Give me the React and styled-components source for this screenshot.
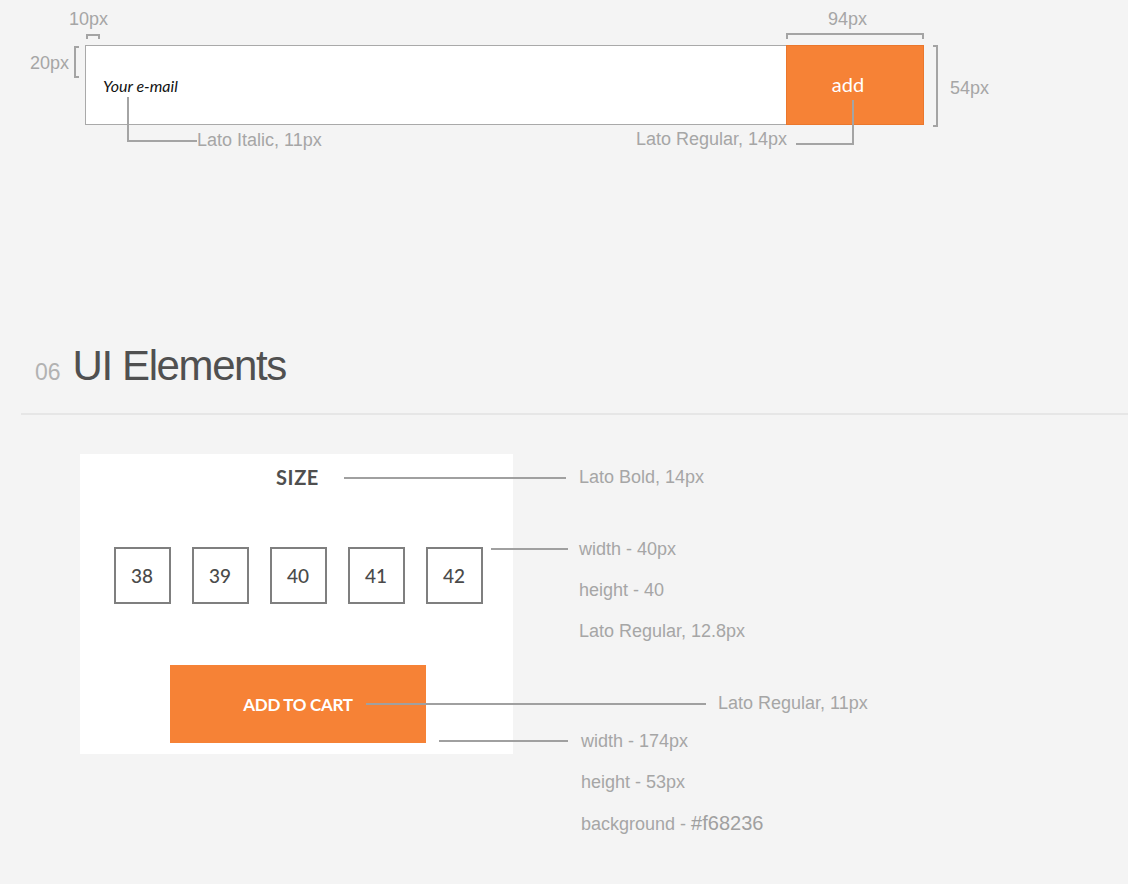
import React from 'react'
import styled, { createGlobalStyle } from 'styled-components'

const GlobalStyle = createGlobalStyle`
  html, body {
    margin: 0;
    padding: 0;
    background: #f4f4f4;
  }
  body {
    font-family: "Liberation Sans", Arial, sans-serif;
  }
`

const Page = styled.div`
  width: 1128px;
  min-height: 884px;
  background: #f4f4f4;
  overflow: hidden;
`

// ---- top spec: e-mail field ----
const TopSpec = styled.div`
  height: 341px;
  box-sizing: border-box;
  padding: 45px 0 0 85px;
`

const Field = styled.div`
  position: relative;
  display: flex;
  width: 839px;
  height: 80px;
`

const EmailInput = styled.div`
  flex: 1;
  display: flex;
  align-items: center;
  box-sizing: border-box;
  padding-left: 17px;
  background: #fff;
  border: 1px solid #a9a9a9;
  border-right: none;
  font-family: Lato, sans-serif;
  font-style: italic;
  font-size: 16px;
  color: #111;
`

const AddButton = styled.div`
  width: 138px;
  display: flex;
  align-items: center;
  justify-content: center;
  box-sizing: border-box;
  padding: 0 14px 2px 0;
  background: #f68236;
  border: 1px solid #eb772c;
  color: #fff;
  font-family: Lato, sans-serif;
  font-size: 20px;
`

const Label = styled.span`
  position: absolute;
  left: ${p => p.$x}px;
  top: ${p => p.$y}px;
  font-size: 18px;
  line-height: 20px;
  color: #a6a6a6;
  white-space: nowrap;
`

// bracket / leader drawn with borders
const Mark = styled.span`
  position: absolute;
  left: ${p => p.$x}px;
  top: ${p => p.$y}px;
  width: ${p => p.$w}px;
  height: ${p => p.$h}px;
  box-sizing: border-box;
  border: 0 solid #a4a4a4;
  ${p => p.$sides.map(s => `border-${s}-width: 2px;`).join('')}
`

// ---- heading ----
const Heading = styled.div`
  display: flex;
  align-items: baseline;
  gap: 12px;
  padding-left: 35px;
  height: 50px;
  line-height: 50px;
`

const Number = styled.span`
  font-size: 23px;
  color: #b2b2b2;
`

const Title = styled.h2`
  margin: 0;
  font-weight: 400;
  font-size: 42px;
  letter-spacing: -1.4px;
  color: #505050;
`

const Divider = styled.hr`
  margin: 22px 0 0 21px;
  border: none;
  height: 2px;
  background: #e6e6e6;
`

// ---- UI elements ----
const ElementsArea = styled.div`
  position: relative;
  display: flex;
  gap: 66px;
  margin: 39px 0 0 80px;
`

const Card = styled.div`
  width: 433px;
  height: 300px;
  box-sizing: border-box;
  padding: 11px 0;
  background: #fff;
  display: flex;
  flex-direction: column;
  align-items: center;
  font-family: Lato, sans-serif;
`

const SizeTitle = styled.div`
  margin-left: 2px;
  font-weight: 700;
  font-size: 20px;
  line-height: 24px;
  letter-spacing: 0.6px;
  color: #4f4f4f;
`

const SizeRow = styled.div`
  display: flex;
  gap: 21px;
  margin: 58px 0 0 3px;
`

const SizeBox = styled.div`
  width: 57px;
  height: 57px;
  box-sizing: border-box;
  border: 2px solid #7f7f7f;
  display: flex;
  align-items: center;
  justify-content: center;
  font-size: 19px;
  font-weight: 500;
  color: #4a4a4a;
`

const CartButton = styled.div`
  margin: 61px 0 0 3px;
  width: 256px;
  height: 78px;
  background: #f68236;
  display: flex;
  align-items: center;
  justify-content: center;
  color: #fff;
  font-weight: 700;
  font-size: 17px;
  letter-spacing: -0.3px;
`

const Notes = styled.div`
  display: flex;
  flex-direction: column;
`

const Note = styled.div`
  margin-top: ${p => p.$top}px;
  margin-left: ${p => p.$indent || 0}px;
  font-size: 18px;
  line-height: 20px;
  color: #a6a6a6;
  white-space: nowrap;
`

const HexValue = styled.span`
  font-size: 20px;
  color: #a0a0a0;
`

const Leader = styled.span`
  position: absolute;
  left: ${p => p.$x}px;
  top: ${p => p.$y}px;
  width: ${p => p.$w}px;
  height: 2px;
  background: #a0a0a0;
`

const sizes = ['38', '39', '40', '41', '42']

export default function App() {
  return (
    <Page>
      <GlobalStyle />
      <TopSpec>
        <Field>
          <EmailInput>Your e-mail</EmailInput>
          <AddButton>add</AddButton>

          <Label $x={-16} $y={-36}>10px</Label>
          <Mark $x={1} $y={-11} $w={14} $h={5} $sides={['top', 'left', 'right']} />

          <Label $x={-55} $y={8}>20px</Label>
          <Mark $x={-11} $y={1} $w={5} $h={32} $sides={['top', 'left', 'bottom']} />

          <Mark $x={42} $y={52} $w={70} $h={45} $sides={['left', 'bottom']} />
          <Label $x={112} $y={85}>Lato Italic, 11px</Label>

          <Label $x={743} $y={-36}>94px</Label>
          <Mark $x={701} $y={-12} $w={138} $h={6} $sides={['top', 'left', 'right']} />

          <Label $x={865} $y={33}>54px</Label>
          <Mark $x={848} $y={0} $w={5} $h={82} $sides={['top', 'right', 'bottom']} />

          <Mark $x={711} $y={55} $w={58} $h={45} $sides={['right', 'bottom']} />
          <Label $x={551} $y={84}>Lato Regular, 14px</Label>
        </Field>
      </TopSpec>

      <Heading>
        <Number>06</Number>
        <Title>UI Elements</Title>
      </Heading>
      <Divider />

      <ElementsArea>
        <Card>
          <SizeTitle>SIZE</SizeTitle>
          <SizeRow>
            {sizes.map(s => (
              <SizeBox key={s}>{s}</SizeBox>
            ))}
          </SizeRow>
          <CartButton>ADD TO CART</CartButton>
        </Card>

        <Notes>
          <Note $top={13}>Lato Bold, 14px</Note>
          <Note $top={52}>width - 40px</Note>
          <Note $top={21}>height - 40</Note>
          <Note $top={21}>Lato Regular, 12.8px</Note>
          <Note $top={52} $indent={139}>Lato Regular, 11px</Note>
          <Note $top={18} $indent={2}>width - 174px</Note>
          <Note $top={21} $indent={2}>height - 53px</Note>
          <Note $top={21} $indent={2}>background - <HexValue>#f68236</HexValue></Note>
        </Notes>

        <Leader $x={264} $y={23} $w={222} />
        <Leader $x={411} $y={94} $w={77} />
        <Leader $x={286} $y={249} $w={340} />
        <Leader $x={359} $y={286} $w={129} />
      </ElementsArea>
    </Page>
  )
}
